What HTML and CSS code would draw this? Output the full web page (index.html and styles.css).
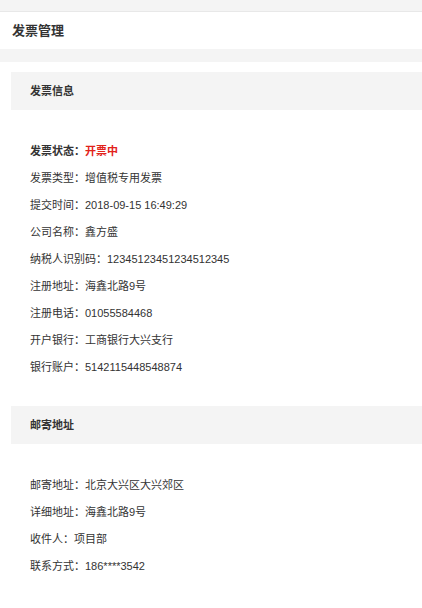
FILE: index.html
```html
<!DOCTYPE html>
<html lang="zh-CN">
  <head>
    <meta charset="UTF-8" />
    <meta name="viewport" content="width=device-width, initial-scale=1.0" />
    <title>发票管理</title>
    <link rel="stylesheet" href="styles.css">
  </head>
  <body>
    <div class="top-gap"></div>
    <div class="page-header">发票管理</div>
    <div class="gap"></div>

    <div class="content">
      <!-- 发票信息 -->
      <div class="section-title">发票信息</div>
      <ul class="info-list">
        <li class="strong">发票状态：<span class="status">开票中</span></li>
        <li>发票类型：增值税专用发票</li>
        <li>提交时间：2018-09-15 16:49:29</li>
        <li>公司名称：鑫方盛</li>
        <li>纳税人识别码：12345123451234512345</li>
        <li>注册地址：海鑫北路9号</li>
        <li>注册电话：01055584468</li>
        <li>开户银行：工商银行大兴支行</li>
        <li>银行账户：5142115448548874</li>
      </ul>

      <!-- 邮寄地址 -->
      <div class="section-title">邮寄地址</div>
      <ul class="info-list">
        <li>邮寄地址：北京大兴区大兴郊区</li>
        <li>详细地址：海鑫北路9号</li>
        <li>收件人：项目部</li>
        <li>联系方式：186****3542</li>
      </ul>
    </div>
  </body>
</html>
```

FILE: styles.css
```css
body {
  margin: 0;
  padding: 0;
  background-color: #f4f4f4;
  font-family: "Liberation Sans", "Noto Sans CJK SC", sans-serif;
  color: #333333;
}

.top-gap {
  height: 11px;
  border-bottom: 1px solid #e8e8e8;
}

.page-header {
  height: 37px;
  line-height: 37px;
  padding-left: 12px;
  background: #ffffff;
  font-size: 13px;
  font-weight: bold;
  color: #333333;
}

.gap {
  height: 13px;
}

.content {
  background: #ffffff;
  padding: 10px 0 30px 11px;
  min-height: 520px;
}

.section-title {
  height: 37px;
  line-height: 37px;
  padding: 1px 0 0 19px;
  background-color: #f4f4f4;
  font-size: 11px;
  font-weight: bold;
  color: #333333;
}

.info-list {
  list-style: none;
  margin: 0;
  padding: 28px 0 25px 19px;
  font-size: 11px;
  line-height: 27px;
}

.info-list .strong {
  font-weight: bold;
}

.status {
  color: #e2231a;
}
```
